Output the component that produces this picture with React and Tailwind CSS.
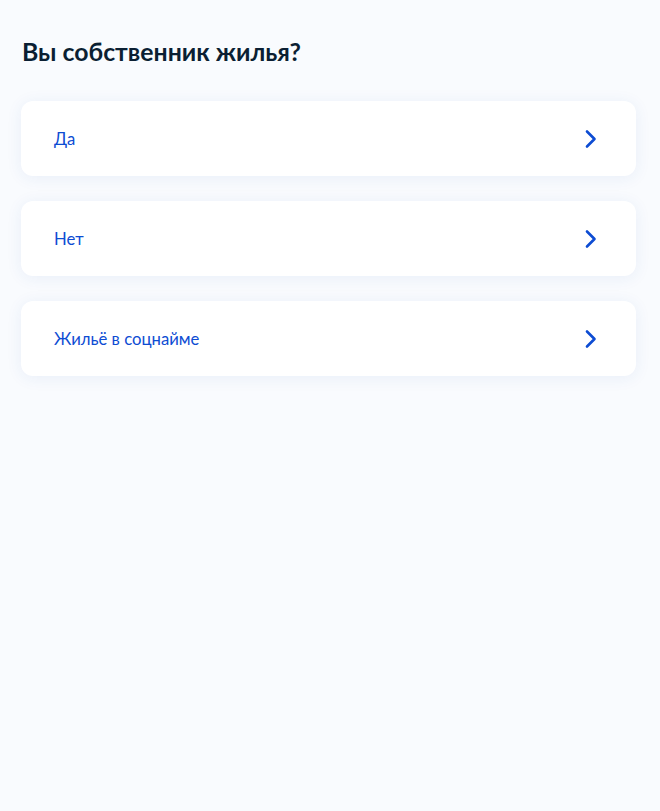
export default function App() {
  const items = ["Да", "Нет", "Жильё в соцнайме"];
  return (
    <div className="min-h-[811px] w-full bg-[#f9fbfe] pl-[21px] pr-[24px] pt-[36px]" style={{ fontFamily: "Lato, 'Noto Sans', sans-serif" }}>
      <h1 className="text-[24.8px] leading-[32px] font-bold text-[#0b1f33] pl-[1px]">Вы собственник жилья?</h1>
      <div className="mt-[33px] flex flex-col gap-[25px]">
        {items.map((t) => (
          <div key={t} className="flex h-[75px] items-center justify-between rounded-[12px] bg-white pl-[33px] pr-[38px] shadow-[0_2px_16px_rgba(44,83,176,0.08)]">
            <span className="text-[16.7px] leading-[24px] text-[#0d4cd3]">{t}</span>
            <svg width="14" height="20" viewBox="0 0 14 20" fill="none">
              <path d="M3 2.5 L10.5 10 L3 17.5" stroke="#0d4cd3" strokeWidth="2.6" strokeLinecap="round" strokeLinejoin="round" />
            </svg>
          </div>
        ))}
      </div>
    </div>
  );
}
